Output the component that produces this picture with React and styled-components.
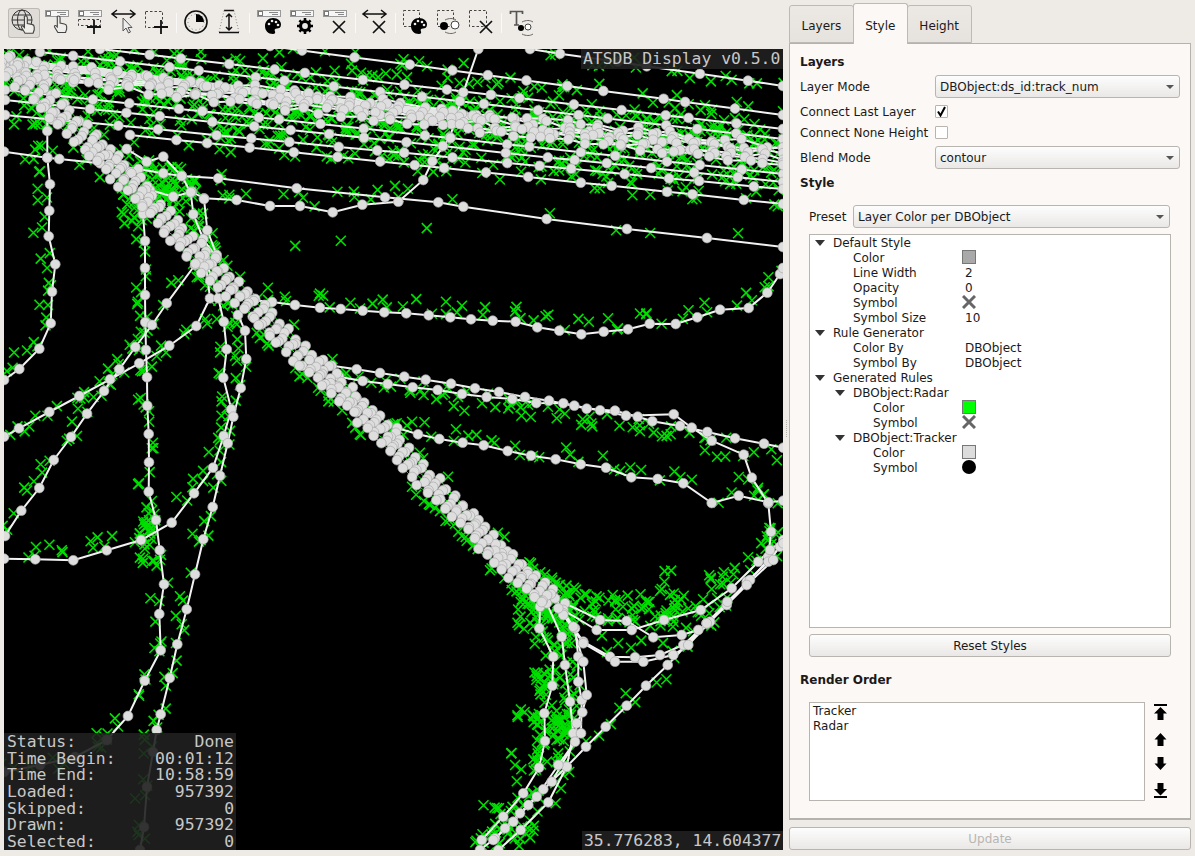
import styled, { createGlobalStyle } from "styled-components";

const GlobalStyle = createGlobalStyle`
  html, body { margin: 0; padding: 0; background: #eeebe7; }
  body { font-family: "DejaVu Sans", sans-serif; font-size: 12px; color: #1a1a1a; }
`;

/* ---------- map data ---------- */

let seed = 12345;
const rnd = () => {
  seed = (seed * 1664525 + 1013904223) % 4294967296;
  return seed / 4294967296;
};
const spread = (v) => (rnd() - 0.5) * 2 * v;

const zoomed = (ox, oy, pts) => pts.map(([x, y]) => [ox + x / 3, oy + y / 3]);
const z7 = (pts) => zoomed(480, 540, pts);
const z8 = (pts) => zoomed(0, 45, pts);
const z9 = (pts) => zoomed(290, 49, pts);
const z10 = (pts) => zoomed(0, 290, pts);
const z11 = (pts) => zoomed(300, 290, pts);

const straight = (x0, y0, x1, y1, step, wobble = 0) => {
  const pts = [];
  const n = Math.round(Math.hypot(x1 - x0, y1 - y0) / step);
  for (let i = 0; i <= n; i++) {
    const t = i / n;
    const j = i === 0 || i === n ? 0 : spread(step * 0.3);
    pts.push([x0 + (x1 - x0) * t + j, y0 + (y1 - y0) * t + j * 0.12 + spread(wobble)]);
  }
  return pts;
};

const sparse = [
  { pts: z8([[142, 110], [142, 178], [142, 258], [142, 338], [150, 418], [148, 497], [146, 574], [166, 658], [156, 740]]).concat(z10([[152, 100], [118, 176], [58, 237], [12, 270]])), bias: [-9, 0] },
  { pts: [[143, 208], [143, 214], [145, 241], [145, 268]].concat(z10([[435, 15], [436, 97], [438, 180], [441, 262], [442, 347], [446, 432], [447, 517], [446, 605], [468, 690], [479, 781], [492, 883], [478, 972], [482, 1081], [434, 1172], [384, 1278], [320, 1350]]), [[107, 740], [75, 757], [40, 765], [4, 772]]), bias: [-3, 0] },
  { pts: [[205, 258]].concat(z10([[630, 25], [589, 108], [508, 167], [418, 220], [330, 268], [238, 318], [148, 366], [57, 415], [12, 440]])), bias: [0, 2] },
  { pts: [[195, 265]].concat(z10([[500, 40], [456, 105], [406, 171], [358, 238], [312, 303], [261, 371], [213, 441], [161, 510], [118, 594], [64, 662], [15, 738]])), bias: [-5, 0] },
  { pts: [[205, 258]].concat(z10([[655, 25], [671, 95], [680, 178], [670, 263], [694, 358], [671, 438], [639, 533], [582, 610], [515, 698], [423, 750], [320, 781], [220, 811], [106, 808], [12, 806]])), bias: [-2, -9] },
  { pts: [[238, 315]].concat(z10([[735, 122], [739, 207], [722, 294], [700, 380], [683, 460], [660, 557], [638, 651], [610, 748], [585, 853], [560, 958], [532, 1063], [509, 1164], [482, 1273], [470, 1320]]), [[153, 752], [147, 787], [144, 827], [140, 850]]), bias: [-4, 0] },
  { pts: z8([[450, 435], [520, 455], [575, 440], [612, 460], [710, 465], [810, 483], [900, 483]]).concat(z9([[128, 490], [217, 467], [325, 458], [400, 393], [427, 337], [480, 265], [520, 130], [565, 0]])), bias: [0, -8], xs: 2 },
  { pts: z8([[12, 320], [142, 338], [178, 342], [300, 355], [415, 372], [490, 385], [545, 393], [655, 400], [890, 430]]).concat(z9([[285, 445], [445, 460], [520, 473], [770, 510]]), [[627, 229], [707, 238], [783, 247]]), bias: [0, -3], xs: 1 },
  { pts: z8([[380, 312], [440, 350], [490, 335], [545, 393], [572, 442], [580, 508], [610, 582], [650, 640]]), bias: [4, 6] },
  { pts: z8([[612, 462], [622, 556], [650, 630]]), bias: [0, 0] },
  { pts: [[250, 300], [272, 302], [295, 305]].concat(z11([[60, 53], [122, 57], [188, 62], [253, 67], [319, 70], [386, 76], [451, 82], [513, 88], [578, 92], [647, 95], [712, 112], [778, 122], [844, 133], [911, 125], [984, 118], [1049, 101], [1127, 102], [1192, 82], [1260, 59], [1346, 54], [1402, 8]]), [[780, 274], [783, 268]]), bias: [0, -7], xs: 2 },
  { pts: z11([[95, 227], [170, 238], [240, 249], [313, 260], [377, 269], [453, 281], [525, 295], [597, 306], [675, 321], [747, 332], [823, 347], [900, 361], [978, 377], [1121, 373], [1175, 413], [1235, 452], [1331, 494], [1355, 563], [1405, 640], [1413, 725], [1405, 800]]), bias: [0, 10], xs: 2 },
  { pts: z11([[117, 260], [188, 273], [263, 282], [338, 292], [413, 300], [486, 312], [560, 321], [637, 327], [709, 339], [790, 340], [860, 356], [945, 362], [1013, 380], [1057, 394], [1140, 408], [1222, 426], [1305, 445], [1392, 461], [1450, 473]]), bias: [0, 10], xs: 2 },
  { pts: z11([[292, 414], [354, 433], [418, 447], [488, 458], [551, 466], [623, 483], [693, 497], [767, 508], [842, 523], [918, 533], [994, 562], [1073, 567], [1150, 580], [1235, 639], [1316, 617], [1405, 637], [1450, 632]]), bias: [0, -6], xs: 2 },
  { pts: z7([[255, 190], [360, 240], [440, 243], [520, 292], [605, 285], [655, 270], [680, 250], [740, 195], [800, 125], [865, 65], [900, 20]]), bias: [0, -18], xs: 2 },
  { pts: z7([[250, 210], [350, 270], [455, 270], [552, 240], [662, 210], [755, 145], [835, 65], [870, 30], [910, 0]]), bias: [0, -14], xs: 2 },
  { pts: z7([[250, 220], [310, 305], [390, 350], [465, 352], [540, 345], [610, 315], [680, 250], [742, 185], [810, 120], [910, 10]]), bias: [0, -10], xs: 1 },
  { pts: z7([[250, 225], [310, 310], [405, 365], [490, 365], [580, 345], [625, 315], [690, 245], [800, 135], [880, 60]]), bias: [0, -10], xs: 1 },
  { pts: z7([[680, 250], [563, 375], [498, 437], [440, 497], [377, 560], [318, 620], [260, 680], [205, 787], [122, 870], [55, 930]]), bias: [-3, 4], xs: 2 },
  { pts: z7([[180, 200], [178, 265], [220, 350], [217, 437], [193, 520], [195, 603], [177, 683], [130, 760], [70, 830], [5, 900]]), bias: [-8, 0], xs: 2 },
  { pts: z7([[200, 190], [245, 290], [255, 375], [270, 485], [280, 580], [260, 680], [190, 748], [120, 820], [45, 895], [0, 930]]), bias: [-6, 3], xs: 2 },
  { pts: z7([[235, 205], [285, 265], [295, 350], [295, 425], [305, 480], [303, 580], [235, 675], [170, 770], [100, 845], [40, 900]]), bias: [-12, 0], xs: 2 },
  { pts: z7([[225, 175], [280, 260], [310, 365], [320, 465], [307, 517], [290, 550], [285, 605], [215, 725], [145, 795], [75, 865]]), bias: [-12, 4], xs: 2 },
];

// straight flight lines through the top of the view
[
  [530, 49, 783, 86], [270, 46, 783, 115], [100, 49, 783, 129], [40, 52, 783, 139],
  [5, 90, 783, 174], [5, 100, 783, 182], [5, 115, 783, 189], [130, 135, 783, 204],
].forEach(([a, b, c, d]) => sparse.push({ pts: straight(a, b, c, d, 42), bias: [0, 0], xs: 3 }));

const centerLine = [
  [4, 62, 13], [47, 102, 13], [90, 142, 12], [133, 185, 12], [200, 258, 11], [233, 288, 11],
  [300, 353, 11], [337, 387, 11], [380, 430, 11], [433, 487, 11], [467, 517, 11], [500, 557, 12],
  [530, 583, 13], [557, 603, 10],
];

const sampleBand = (offset) => {
  const pts = [];
  for (let i = 0; i < centerLine.length - 1; i++) {
    const [x0, y0, w] = centerLine[i];
    const [x1, y1] = centerLine[i + 1];
    const len = Math.hypot(x1 - x0, y1 - y0);
    const n = Math.max(1, Math.round(len / 11));
    for (let k = 0; k < n; k++) {
      const t = k / n;
      const nx = -(y1 - y0) / len;
      const ny = (x1 - x0) / len;
      const o = offset * w + spread(1.5);
      pts.push([x0 + (x1 - x0) * t + nx * o + spread(2), y0 + (y1 - y0) * t + ny * o + spread(2)]);
    }
  }
  return pts;
};

const band = [-0.75, -0.4, 0, 0.4, 0.75].map((o) => sampleBand(o));
const core = [
  [5, 60, 783, 146], [5, 63, 783, 150], [5, 66, 783, 154], [5, 69, 783, 158], [5, 72, 783, 162], [5, 75, 783, 166],
].map(([a, b, c, d]) => straight(a, b, c, d, 18, 3));

const crosses = [];
const cross = (x, y) => crosses.push([x, y]);
sparse.forEach(({ pts, bias, xs = 3 }) => {
  for (let i = 0; i < pts.length - 1; i++) {
    const [x0, y0] = pts[i];
    const [x1, y1] = pts[i + 1];
    for (let k = 0; k < xs; k++) {
      const t = rnd();
      cross(x0 + (x1 - x0) * t + bias[0] + spread(8), y0 + (y1 - y0) * t + bias[1] + spread(8));
    }
  }
});
const scatter = (cx, cy, rx, ry, n) => {
  for (let i = 0; i < n; i++) cross(cx + spread(rx), cy + spread(ry));
};
centerLine.slice(0, -1).forEach(([x, y], i) => {
  const [x1, y1] = centerLine[i + 1];
  for (let k = 0; k < 9; k++) {
    const t = rnd();
    const side = rnd() > 0.45 ? 1 : -1;
    const l = Math.hypot(x1 - x, y1 - y);
    const o = side * (12 + rnd() * 6);
    cross(x + (x1 - x) * t - ((y1 - y) / l) * o, y + (y1 - y) * t + ((x1 - x) / l) * o);
  }
});
for (let x = 10; x < 783; x += 6) {
  const base = 70 + (x - 10) * 0.11;
  for (let k = 0; k < 4; k++) cross(x + spread(6), base + spread(rnd() > 0.7 ? 40 : 18));
}
scatter(155, 185, 25, 25, 30);
scatter(178, 192, 18, 12, 20);
scatter(555, 660, 22, 80, 80);
scatter(545, 610, 28, 22, 40);
scatter(625, 610, 60, 16, 50);
scatter(700, 600, 40, 30, 22);
scatter(535, 740, 24, 35, 26);
scatter(505, 820, 30, 26, 26);
scatter(146, 535, 8, 28, 20);
scatter(295, 245, 1, 1, 1);
scatter(340, 240, 1, 1, 1);
scatter(426, 228, 1, 1, 1);
scatter(128, 200, 12, 30, 10);

const linePoints = (pts) => pts.map(([x, y]) => `${x.toFixed(1)},${y.toFixed(1)}`).join(" ");

const TrackMap = () => (
  <MapSvg viewBox="4 49 779 801">
    <g stroke="#00e000" strokeWidth="1.6">
      {crosses.map(([x, y], i) => (
        <path key={i} d={`M${(x - 5).toFixed(1)} ${(y - 5).toFixed(1)}l10 10m0 -10l-10 10`} />
      ))}
    </g>
    <g fill="none" stroke="#00e600" strokeWidth="1">
      {band.map((pts, i) => (
        <polyline key={i} points={linePoints(pts)} />
      ))}
    </g>
    <g fill="none" stroke="#f2f2f2" strokeWidth="2">
      {sparse.map(({ pts }, i) => (
        <polyline key={i} points={linePoints(pts)} />
      ))}
      {core.map((pts, i) => (
        <polyline key={i} points={linePoints(pts)} />
      ))}
    </g>
    <polyline points="10,62 100,72 300,97 500,120" fill="none" stroke="#e4e4e4" strokeWidth="7" />
    <g fill="#dedede" stroke="#ababab" strokeWidth="0.7">
      {[...sparse.map((t) => t.pts), ...core, ...band].map((pts, i) =>
        pts.map(([x, y], k) => <circle key={`${i}-${k}`} cx={x.toFixed(1)} cy={y.toFixed(1)} r="4.900" />)
      )}
    </g>
  </MapSvg>
);

/* ---------- toolbar icons ---------- */

const Ico = ({ children }) => (
  <svg width="32" height="30" viewBox="0 0 32 30" fill="none" stroke="#111">
    {children}
  </svg>
);

const LabelBar = ({ x = 4 }) => (
  <g>
    <rect x={x + 0.5} y="2.5" width="23" height="6" fill="#f6f6f6" stroke="#999" />
    <rect x={x + 1.5} y="3.5" width="4" height="4" fill="#fff" stroke="#777" />
    <path d={`M${x + 12} 4.5h9M${x + 15} 6.5h6`} stroke="#888" />
  </g>
);
const DashBox = ({ x, y, w, h }) => (
  <rect x={x + 0.5} y={y + 0.5} width={w} height={h} stroke="#444" strokeDasharray="2.5 2" />
);
const Plus = ({ x, y }) => <path d={`M${x} ${y - 7}v14M${x - 7} ${y}h14`} strokeWidth="1.8" />;
const Cross = ({ x, y }) => <path d={`M${x - 6} ${y - 6}l12 12M${x + 6} ${y - 6}l-12 12`} strokeWidth="1.7" />;
const WideArrow = ({ y = 6, x = 4 }) => (
  <path d={`M${x} ${y}h23M${x + 5} ${y - 4}l-5 4l5 4M${x + 18} ${y - 4}l5 4l-5 4`} strokeWidth="1.5" />
);
const Palette = ({ x, y }) => (
  <g>
    <path
      d={`M${x} ${y - 8}c5 0 8 3 8 6.500c0 3 -2 4 -4 4c-2 0 -3 1 -2 3c.5 1.500 0 2.500 -2 2.500c-5 0 -8 -3.500 -8 -8c0 -4.500 3.500 -8 8 -8z`}
      fill="#000"
      stroke="none"
    />
    <circle cx={x - 4} cy={y - 2} r="1.300" fill="#eee" stroke="none" />
    <circle cx={x - 1} cy={y - 5} r="1.300" fill="#eee" stroke="none" />
    <circle cx={x + 3} cy={y - 4} r="1.300" fill="#eee" stroke="none" />
    <circle cx={x + 5} cy={y - 1} r="1.300" fill="#eee" stroke="none" />
  </g>
);
const Gear = ({ x, y }) => (
  <g>
    <circle cx={x} cy={y} r="4.500" strokeWidth="3.200" stroke="#000" />
    <path
      d={`M${x} ${y - 8}v3M${x} ${y + 5}v3M${x - 8} ${y}h3M${x + 5} ${y}h3M${x - 5.600} ${y - 5.600}l2 2M${x + 3.600} ${y + 3.600}l2 2M${x + 5.600} ${y - 5.600}l-2 2M${x - 3.600} ${y + 3.600}l-2 2`}
      stroke="#000"
      strokeWidth="2.600"
    />
  </g>
);
const Hand = ({ x, y, s = 1, fill = "#f0eeea" }) => (
  <path
    transform={`translate(${x} ${y}) scale(${s})`}
    d="M4 0c1 0 1.500.6 1.500 1.500v5l4 .8c1.500.3 2 1 2 2.200v2.500l-1 3h-7l-3-5c-.5-1 .6-1.800 1.500-1l1 1V1.500C2.500.6 3 0 4 0z"
    fill={fill}
    stroke="#444"
  />
);
const Dots = ({ a, b, c = a, r = 4, ox = 0 }) => (
  <g>
    <circle cx={a} cy={b} r={r} fill="#000" stroke="none" />
    <circle cx={c + ox} cy={b - 1} r={r} fill="#fff" stroke="#444" />
    <path d={`M${a + 1} ${b - 6}c4 -2 8 -2 11 0M${a + 1} ${b + 6}c4 2 8 2 11 0`} stroke="#666" />
  </g>
);

const icons = [
  <Ico key="nav">
    <circle cx="14" cy="12" r="10" stroke="#333" />
    <ellipse cx="14" cy="12" rx="4.500" ry="10" stroke="#333" />
    <path d="M4 12h20M5.500 7h17M5.500 17h17" stroke="#333" />
    <Hand x="13" y="8" s="1.150" />
  </Ico>,
  <Ico key="hand">
    <LabelBar />
    <Hand x="13" y="8" s="1.100" />
  </Ico>,
  <Ico key="addbox">
    <LabelBar />
    <DashBox x={4} y={11} w={22} h={6} />
    <Plus x={20} y={19} />
  </Ico>,
  <Ico key="measure">
    <WideArrow x={5} />
    <path d="M16 10l0 13l3-3l2.500 5l2-1l-2.500-4.500h4z" fill="#eee" stroke="#555" />
  </Ico>,
  <Ico key="add">
    <DashBox x={5} y={3} w={17} h={16} />
    <Plus x={21} y={19} />
  </Ico>,
  "sep",
  <Ico key="clock">
    <circle cx="16" cy="14" r="11" strokeWidth="1.600" />
    <circle cx="16" cy="14" r="8" stroke="#777" strokeDasharray="1 3" />
    <path d="M16 14V6a8 8 0 0 1 8 8z" fill="#000" stroke="none" />
  </Ico>,
  <Ico key="filter">
    <path d="M11 2.500h10M6 24.500h20" strokeWidth="1.600" />
    <path d="M11 2.500L6 24.500M21 2.500l5 22" stroke="#888" strokeDasharray="1 2" />
    <path d="M16 6v16M13 9l3-3l3 3M13 19l3 3l3-3" strokeWidth="1.500" />
  </Ico>,
  "sep",
  <Ico key="lp">
    <LabelBar />
    <Palette x={20} y={18} />
  </Ico>,
  <Ico key="lg">
    <LabelBar />
    <Gear x={19} y={18} />
  </Ico>,
  <Ico key="lx">
    <LabelBar />
    <Cross x={20} y={19} />
  </Ico>,
  "sep",
  <Ico key="ax">
    <WideArrow />
    <Cross x={20} y={19} />
  </Ico>,
  "sep",
  <Ico key="dp">
    <DashBox x={4} y={2} w={16} h={16} />
    <Palette x={20} y={18} />
  </Ico>,
  <Ico key="dd">
    <DashBox x={5} y={2} w={16} h={16} />
    <Dots a={12} b={18} c={23} />
  </Ico>,
  <Ico key="dx">
    <DashBox x={4} y={2} w={17} h={16} />
    <Cross x={21} y={19} />
  </Ico>,
  "sep",
  <Ico key="txt">
    <path d="M5.500 6V3.500h12V6M11.500 3.500v13.500M9 17h5" stroke="#555" strokeWidth="1.700" />
    <Dots a={16} b={20} c={23} r={3} />
  </Ico>,
];

/* ---------- tree data ---------- */

const rows = [
  { level: 0, open: true, name: "Default Style" },
  { level: 1, name: "Color", swatch: "#a9a9a9" },
  { level: 1, name: "Line Width", value: "2" },
  { level: 1, name: "Opacity", value: "0" },
  { level: 1, name: "Symbol", symbol: "x" },
  { level: 1, name: "Symbol Size", value: "10" },
  { level: 0, open: true, name: "Rule Generator" },
  { level: 1, name: "Color By", value: "DBObject" },
  { level: 1, name: "Symbol By", value: "DBObject" },
  { level: 0, open: true, name: "Generated Rules" },
  { level: 1, open: true, name: "DBObject:Radar" },
  { level: 2, name: "Color", swatch: "#00ff00" },
  { level: 2, name: "Symbol", symbol: "x" },
  { level: 1, open: true, name: "DBObject:Tracker" },
  { level: 2, name: "Color", swatch: "#dcdcdc" },
  { level: 2, name: "Symbol", symbol: "dot" },
];

const stats = [
  ["Status:", "Done"],
  ["Time Begin:", "00:01:12"],
  ["Time End:", "10:58:59"],
  ["Loaded:", "957392"],
  ["Skipped:", "0"],
  ["Drawn:", "957392"],
  ["Selected:", "0"],
];

const SymbolIcon = ({ kind }) =>
  kind === "x" ? (
    <svg width="14" height="14" viewBox="0 0 14 14">
      <path d="M1 1l12 12M13 1L1 13" stroke="#666" strokeWidth="3" />
    </svg>
  ) : (
    <svg width="14" height="14" viewBox="0 0 14 14">
      <circle cx="7" cy="7" r="7" fill="#000" />
    </svg>
  );

const orderIcons = [
  { h: 16, gap: 13, d: "M0 0h13v2H0zM6.500 3l6.500 6.500H9.500v6.500h-6V9.500H0z" },
  { h: 13, gap: 11, d: "M6.500 0l6 6.500h-3V13h-6V6.500h-3z" },
  { h: 13, gap: 13, d: "M3.500 0h6v6.500h3l-6 6.500l-6-6.500h3z" },
  { h: 15, gap: 0, d: "M3.500 0h6v6h3.500l-6.500 6.500L0 6h3.500zM0 13h13v2H0z" },
];

const App = () => (
  <>
    <GlobalStyle />
    <Page>
      <LeftColumn>
        <Toolbar>
          {icons.map((icon, i) =>
            icon === "sep" ? <ToolSep key={i} /> : <ToolButton key={i} $active={i === 0}>{icon}</ToolButton>
          )}
        </Toolbar>
        <MapView>
          <TrackMap />
          <TitleTag>ATSDB Display v0.5.0</TitleTag>
          <StatsBox>
            {stats.map(([k, v]) => (
              <StatRow key={k}>
                <span>{k}</span>
                <span>{v}</span>
              </StatRow>
            ))}
          </StatsBox>
          <CoordTag>35.776283, 14.604377</CoordTag>
        </MapView>
      </LeftColumn>
      <Splitter />
      <RightColumn>
        <TabBar>
          <Tab>Layers</Tab>
          <Tab $active>Style</Tab>
          <Tab>Height</Tab>
        </TabBar>
        <TabPanel>
          <SectionTitle>Layers</SectionTitle>
          <FormRow $top={5}>
            <FormLabel>Layer Mode</FormLabel>
            <Combo>DBObject:ds_id:track_num</Combo>
          </FormRow>
          <CheckRow $top={3}>
            <FormLabel>Connect Last Layer</FormLabel>
            <CheckBox>
              <svg width="11" height="11" viewBox="0 0 11 11">
                <path d="M2 5.500l2.500 4L9 1" fill="none" stroke="#000" strokeWidth="2" />
              </svg>
            </CheckBox>
          </CheckRow>
          <CheckRow>
            <FormLabel>Connect None Height</FormLabel>
            <CheckBox />
          </CheckRow>
          <FormRow $top={3}>
            <FormLabel>Blend Mode</FormLabel>
            <Combo>contour</Combo>
          </FormRow>
          <SectionTitle $top={6}>Style</SectionTitle>
          <Indented>
            <PresetRow>
              <span>Preset</span>
              <PresetCombo>Layer Color per DBObject</PresetCombo>
            </PresetRow>
            <Tree>
              {rows.map((r, i) => (
                <TreeRow key={i}>
                  <TreeName $level={r.level}>
                    {r.open && <TreeArrow />}
                    {r.name}
                  </TreeName>
                  {r.value && <TreeValue>{r.value}</TreeValue>}
                  {r.swatch && <Swatch $color={r.swatch} />}
                  {r.symbol && <SymbolIcon kind={r.symbol} />}
                </TreeRow>
              ))}
            </Tree>
            <PushButton>Reset Styles</PushButton>
          </Indented>
          <SectionTitle $top={15}>Render Order</SectionTitle>
          <OrderRow>
            <OrderList>
              <div>Tracker</div>
              <div>Radar</div>
            </OrderList>
            <OrderButtons>
              {orderIcons.map(({ d, h, gap }) => (
                <OrderIcon key={d} width="13" height={h} viewBox={`0 0 13 ${h}`} $gap={gap}>
                  <path d={d} fill="#000" />
                </OrderIcon>
              ))}
            </OrderButtons>
          </OrderRow>
        </TabPanel>
        <UpdateButton>Update</UpdateButton>
      </RightColumn>
    </Page>
  </>
);

const Page = styled.div`
  width: 1195px;
  height: 856px;
  display: flex;
  overflow: hidden;
  background: #eeebe7;
`;

const LeftColumn = styled.div`
  width: 783px;
  padding-left: 4px;
  box-sizing: border-box;
  display: flex;
  flex-direction: column;
`;

const Toolbar = styled.div`
  height: 49px;
  margin-left: -4px;
  padding: 8px 0 0 8px;
  box-sizing: border-box;
  display: flex;
  align-items: flex-start;
`;

const ToolButton = styled.div`
  width: 32px;
  height: 30px;
  margin-right: 1px;
  flex: none;
  box-sizing: border-box;
  border-radius: 3px;
  background: ${({ $active }) => ($active ? "#dfdcd8" : "transparent")};
  box-shadow: ${({ $active }) => ($active ? "inset 0 0 0 1px #bdb9b5" : "none")};
  svg {
    display: block;
  }
`;

const ToolSep = styled.div`
  width: 1px;
  height: 20px;
  margin: 5px 3px 0 3px;
  flex: none;
  background: #fbf9f7;
`;

const MapView = styled.div`
  position: relative;
  width: 779px;
  height: 801px;
  background: #000;
  overflow: hidden;
  font-family: "DejaVu Sans Mono", monospace;
  font-size: 16.4px;
  color: #c8c8c8;
`;

const MapSvg = styled.svg`
  display: block;
  width: 779px;
  height: 801px;
`;

const TitleTag = styled.div`
  position: absolute;
  top: 0;
  right: 0;
  width: 202px;
  height: 20px;
  line-height: 20px;
  padding-left: 2px;
  box-sizing: border-box;
  white-space: nowrap;
  background: rgba(32, 32, 32, 0.92);
`;

const StatsBox = styled.div`
  position: absolute;
  left: 0;
  top: 684px;
  width: 232px;
  height: 117px;
  padding: 1px 2px 0 3px;
  box-sizing: border-box;
  background: rgba(32, 32, 32, 0.9);
`;

const StatRow = styled.div`
  display: flex;
  justify-content: space-between;
  height: 16.7px;
  line-height: 16.7px;
`;

const CoordTag = styled.div`
  position: absolute;
  right: 0;
  bottom: 0;
  width: 201px;
  height: 19px;
  line-height: 19px;
  padding-left: 2px;
  box-sizing: border-box;
  white-space: nowrap;
  background: rgba(32, 32, 32, 0.92);
`;

const Splitter = styled.div`
  width: 6px;
  flex: none;
  position: relative;
  &::after {
    content: "";
    position: absolute;
    left: 3px;
    top: 420px;
    height: 17px;
    border-left: 1px dotted #b5b1ad;
  }
`;

const RightColumn = styled.div`
  width: 402px;
  flex: none;
  display: flex;
  flex-direction: column;
`;

const TabBar = styled.div`
  height: 43px;
  display: flex;
  align-items: flex-end;
  position: relative;
  z-index: 1;
`;

const Tab = styled.div`
  height: ${({ $active }) => ($active ? "41px" : "38px")};
  margin-bottom: ${({ $active }) => ($active ? "-1px" : "0")};
  margin-right: -1px;
  padding: 3px 11.500px 0;
  box-sizing: border-box;
  display: flex;
  align-items: center;
  border: 1px solid #bdb9b5;
  border-bottom: ${({ $active }) => ($active ? "none" : "1px solid #bdb9b5")};
  border-radius: 3px 3px 0 0;
  background: ${({ $active }) => ($active ? "#fcf8f5" : "linear-gradient(#ece9e5, #e6e3df)")};
`;

const TabPanel = styled.div`
  height: 777px;
  padding: 10px 10px 0 10px;
  box-sizing: border-box;
  border: 1px solid #b5b1ad;
  border-bottom-width: 2px;
  background: #fcf8f5;
`;

const SectionTitle = styled.div`
  margin-top: ${({ $top }) => $top || 0}px;
  height: 16px;
  line-height: 16px;
  font-weight: bold;
`;

const FormRow = styled.div`
  margin-top: ${({ $top }) => $top || 0}px;
  display: grid;
  grid-template-columns: 135px 245px;
  align-items: center;
`;

const CheckRow = styled(FormRow)`
  height: 21px;
`;

const FormLabel = styled.span`
  white-space: nowrap;
`;

const Combo = styled.div`
  position: relative;
  height: 23px;
  line-height: 22px;
  padding-left: 4px;
  box-sizing: border-box;
  border: 1px solid #b8b4b0;
  border-radius: 3px;
  background: linear-gradient(#fdfdfd, #e9e8e6);
  &::after {
    content: "";
    position: absolute;
    right: 5px;
    top: 9px;
    border-left: 4px solid transparent;
    border-right: 4px solid transparent;
    border-top: 4px solid #555;
  }
`;

const PresetCombo = styled(Combo)`
  margin-right: 1px;
`;

const CheckBox = styled.div`
  width: 13px;
  height: 13px;
  box-sizing: border-box;
  border: 1px solid #b8b4b0;
  border-radius: 1px;
  background: #fff;
  display: flex;
  align-items: center;
  justify-content: center;
`;

const Indented = styled.div`
  margin: 14px 9px 0 9px;
`;

const PresetRow = styled.div`
  display: grid;
  grid-template-columns: 44px 1fr;
  align-items: center;
`;

const Tree = styled.div`
  height: 394px;
  margin-top: 6px;
  box-sizing: border-box;
  border: 1px solid #b8b4b0;
  background: #fff;
`;

const TreeRow = styled.div`
  height: 15px;
  display: grid;
  grid-template-columns: 152px auto;
  justify-content: start;
  align-items: start;
  line-height: 17px;
`;

const TreeName = styled.div`
  position: relative;
  padding-left: ${({ $level }) => 23 + $level * 20}px;
  white-space: nowrap;
`;

const TreeArrow = styled.span`
  position: absolute;
  margin-left: -18px;
  top: 5px;
  border-left: 5px solid transparent;
  border-right: 5px solid transparent;
  border-top: 6px solid #333;
`;

const TreeValue = styled.span`
  padding-left: 3px;
`;

const Swatch = styled.div`
  width: 14px;
  height: 14px;
  box-sizing: border-box;
  border: 1px solid #777;
  background: ${({ $color }) => $color};
`;

const PushButton = styled.div`
  height: 23px;
  line-height: 22px;
  margin-top: 6px;
  box-sizing: border-box;
  text-align: center;
  border: 1px solid #b8b4b0;
  border-radius: 3px;
  background: linear-gradient(#fdfdfd, #e9e8e6);
`;

const OrderRow = styled.div`
  margin: 14px 0 0 9px;
  display: flex;
  gap: 9px;
`;

const OrderList = styled.div`
  width: 336px;
  height: 99px;
  padding: 1px 3px;
  box-sizing: border-box;
  line-height: 15px;
  border: 1px solid #b8b4b0;
  background: #fff;
`;

const OrderButtons = styled.div`
  display: flex;
  flex-direction: column;
  padding-top: 2px;
`;

const OrderIcon = styled.svg`
  display: block;
  margin-bottom: ${({ $gap }) => $gap}px;
`;

const UpdateButton = styled(PushButton)`
  margin-top: 7px;
  color: #b9b6b2;
`;

export default App;
